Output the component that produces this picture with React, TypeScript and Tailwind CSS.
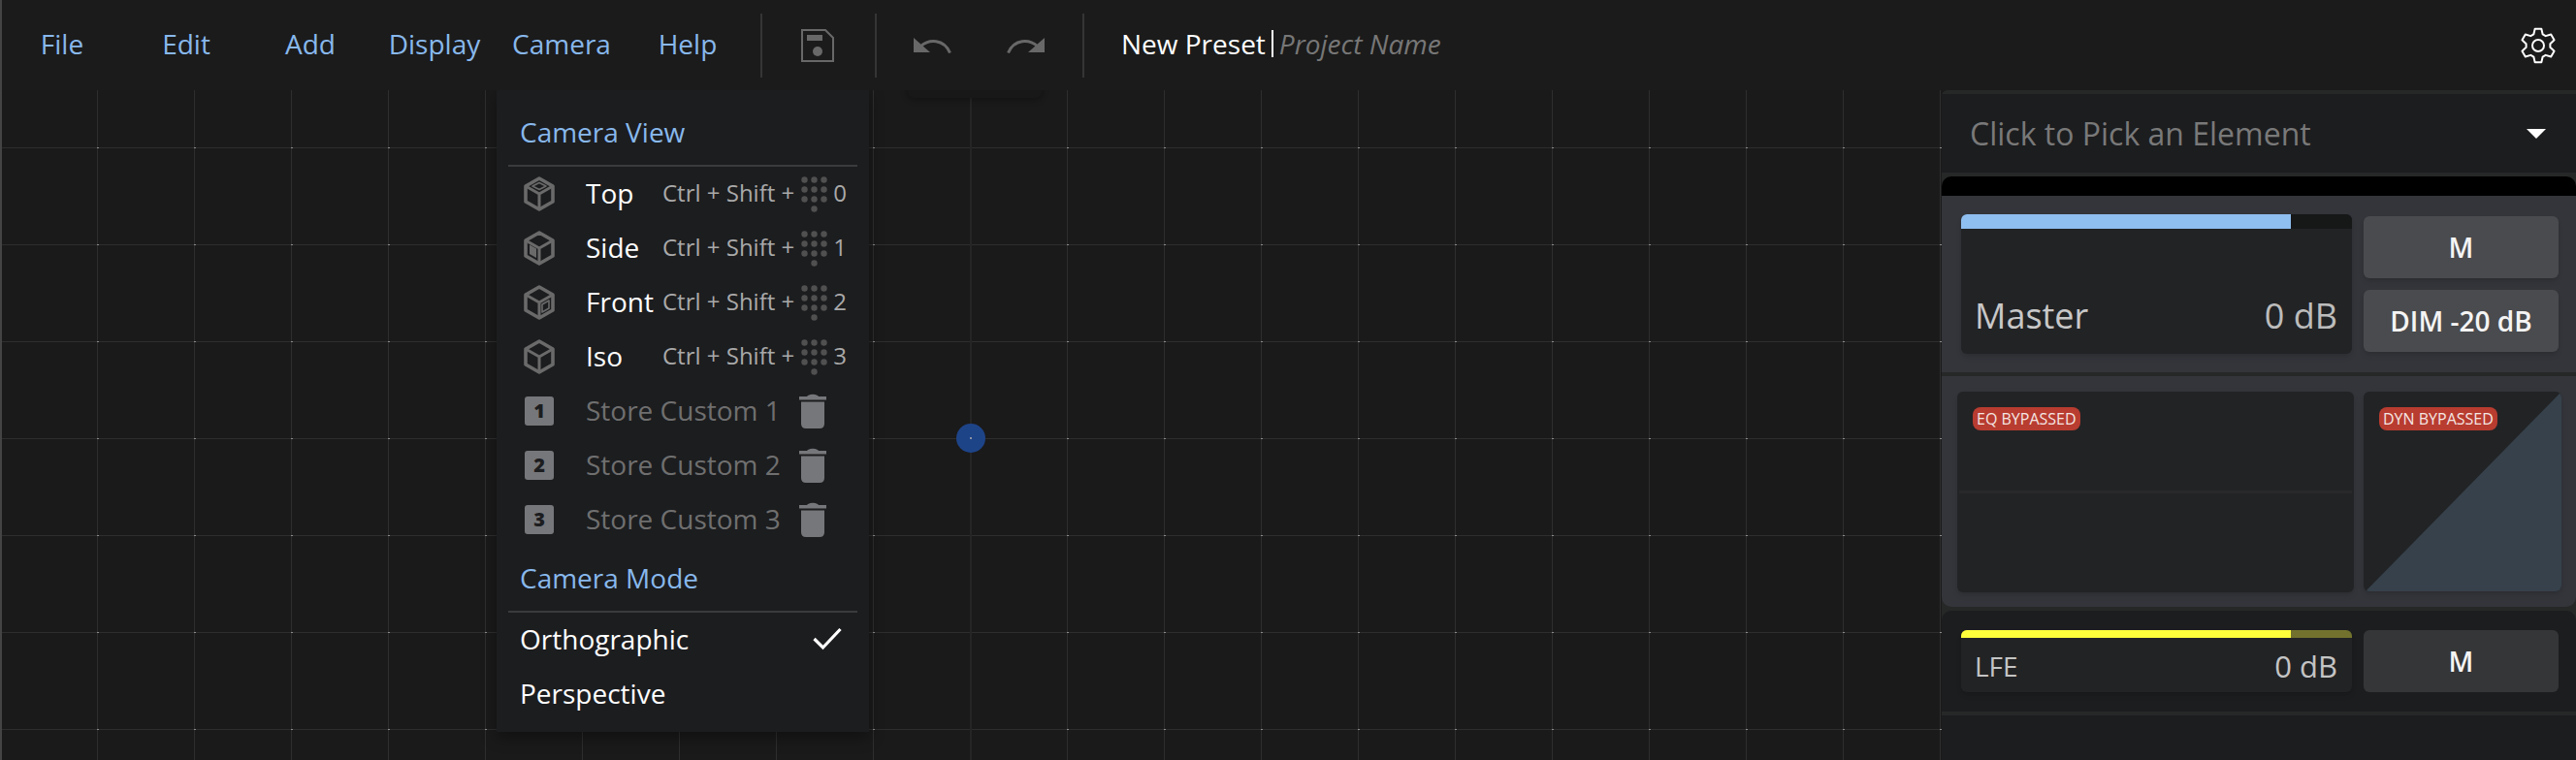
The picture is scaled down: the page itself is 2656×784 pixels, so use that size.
import React from "react";

const menus = [
  { label: "File", offset: "" },
  { label: "Edit", offset: "" },
  { label: "Add", offset: "" },
  { label: "Display", offset: "" },
  { label: "Camera", offset: "ml-[3px]" },
  { label: "Help", offset: "ml-[2px]" },
];

const views = [
  { label: "Top", face: "top", key: "0" },
  { label: "Side", face: "side", key: "1" },
  { label: "Front", face: "front", key: "2" },
  { label: "Iso", face: "none", key: "3" },
];

function gearPoints() {
  const pts: string[] = [];
  for (let i = 0; i < 6; i++) {
    const a = (i * 60 * Math.PI) / 180 - Math.PI / 2;
    const at = (r: number, d: number) => {
      const t = a + (d * Math.PI) / 180;
      return `${(19 + r * Math.cos(t)).toFixed(2)},${(19 + r * Math.sin(t)).toFixed(2)}`;
    };
    pts.push(at(12.5, -22), at(17.5, -11), at(17.5, 11), at(12.5, 22));
  }
  return pts.join(" ");
}

function Gear() {
  return (
    <svg width="38" height="38" viewBox="0 0 38 38" fill="none" stroke="#fff" strokeWidth="2" strokeLinejoin="round">
      <polygon points={gearPoints()} />
      <circle cx="19" cy="19" r="6" />
    </svg>
  );
}

function Cube({ face }: { face: string }) {
  return (
    <svg width="32" height="36" viewBox="0 0 32 36" fill="none" stroke="#6a6a6a" strokeWidth="3.6" strokeLinejoin="round">
      <polygon points="16,2 30,10 30,26 16,34 2,26 2,10" />
      <path d="M2 10 L16 18 L30 10 M16 18 V34" strokeWidth="3" />
      {face === "top" && <polygon points="16,6.5 23,10 16,13.5 9,10" strokeWidth="1.6" />}
      {face === "side" && <polygon points="6,14.5 13,18.5 13,28 6,24" fill="#6a6a6a" stroke="none" />}
      {face === "front" && (
        <polygon points="19,20 26,16 26,24 19,28" fill="#1c1d1f" stroke="#6a6a6a" strokeWidth="1.6" />
      )}
    </svg>
  );
}

function Numpad() {
  const dots: [number, number][] = [];
  for (let r = 0; r < 3; r++) for (let c = 0; c < 3; c++) dots.push([3.5 + c * 10, 3.5 + r * 10]);
  dots.push([13.5, 33.5]);
  return (
    <svg width="27" height="37" viewBox="0 0 27 37" fill="#505050">
      {dots.map(([x, y]) => (
        <circle key={`${x}-${y}`} cx={x} cy={y} r="3.2" />
      ))}
    </svg>
  );
}

function Trash() {
  return (
    <svg width="28" height="36" viewBox="0 0 28 36" fill="#76777a">
      <path d="M9 2 Q14 -0.5 19 2 L20 3 H28 V6.5 H0 V3 H8 Z" />
      <path d="M2 8.5 H26 V31 Q26 36 21 36 H7 Q2 36 2 31 Z" />
    </svg>
  );
}

function UndoArrow({ flip }: { flip?: boolean }) {
  return (
    <svg width="40" height="16" viewBox="0 0 40 16" fill="#686868" className={flip ? "-scale-x-100" : ""}>
      <polygon points="0,0 0,15 17,15" />
      <path d="M7 9 C16 1 31 1 37.5 15.5" fill="none" stroke="#686868" strokeWidth="3" />
    </svg>
  );
}

function Separator() {
  return <div className="w-[2px] h-[66px] bg-[#353535]" />;
}

function Divider() {
  return <div className="mx-[12px] h-[2px] bg-[#3a3b3d]" />;
}

function Grid() {
  return (
    <svg className="absolute inset-0" width="2656" height="691">
      <defs>
        <pattern id="cell" width="100" height="100" patternUnits="userSpaceOnUse" x="0" y="-41">
          <rect x="0" y="0" width="1" height="100" fill="#2e2e2e" />
          <rect x="0" y="0" width="100" height="1" fill="#2e2e2e" />
          <rect x="0" y="0" width="2" height="1" fill="#8a8a8a" />
        </pattern>
      </defs>
      <rect width="2656" height="691" fill="url(#cell)" />
      <rect x="1000" y="0" width="2" height="691" fill="#252525" />
      <circle cx="1001" cy="359" r="15" fill="#1e4488" />
      <rect x="1000" y="358" width="2" height="2" fill="#8a93a3" />
    </svg>
  );
}

function CameraMenu() {
  return (
    <div className="absolute left-[512px] top-[-1px] w-[384px] h-[663px] bg-[#1c1d1f] shadow-[0_6px_14px_rgba(0,0,0,0.35)]">
      <div className="h-[78px] pl-[24px] pt-[25px] text-[28px] leading-[38px] text-[#88b8ec]">Camera View</div>
      <Divider />
      {views.map((view) => (
        <div key={view.label} className="flex items-center h-[56px] pl-[28px]">
          <Cube face={view.face} />
          <span className="ml-[32px] mb-[2px] w-[79px] text-[28px] text-white">{view.label}</span>
          <span className="mb-[2px] whitespace-nowrap text-[24px] text-[#a9a9a9]">Ctrl + Shift +</span>
          <span className="ml-[7px]">
            <Numpad />
          </span>
          <span className="ml-[6px] mb-[2px] text-[24px] text-[#a9a9a9]">{view.key}</span>
        </div>
      ))}
      {[1, 2, 3].map((n) => (
        <div key={n} className="flex items-center h-[56px] pl-[29px]">
          <div className="flex items-center justify-center w-[30px] h-[30px] rounded-[3px] bg-[#76777a] text-[20px] font-extrabold text-[#1c1d1f]">
            {n}
          </div>
          <span className="ml-[33px] mb-[2px] w-[220px] text-[28px] text-[#6f6f6f]">Store Custom {n}</span>
          <Trash />
        </div>
      ))}
      <div className="flex items-center h-[66px] pl-[24px] pb-[2px] text-[28px] text-[#88b8ec]">Camera Mode</div>
      <Divider />
      <div className="flex items-center justify-between h-[56px] pl-[24px] pr-[28px] pb-[2px] text-[28px] text-white">
        Orthographic
        <svg width="30" height="24" viewBox="0 0 30 24" fill="none" stroke="#fff" strokeWidth="3.2">
          <path d="M1.5 12 L10.5 21 L28.5 2" />
        </svg>
      </div>
      <div className="flex items-center h-[56px] pl-[24px] pb-[2px] text-[28px] text-white">Perspective</div>
    </div>
  );
}

function SidePanel() {
  return (
    <div className="relative ml-auto flex flex-col gap-[4px] w-[654px] h-full pt-[4px] bg-[#262727] rounded-tl-[6px]">
      <div className="flex items-center justify-between h-[81px] pl-[29px] pr-[31px] bg-[#1c1d1f]">
        <span className="text-[32px] text-[#797979]">Click to Pick an Element</span>
        <span className="w-0 h-0 border-x-[10px] border-x-transparent border-t-[10px] border-t-white" />
      </div>

      <div className="h-[202px] pt-[20px] bg-black rounded-t-[10px] overflow-hidden">
        <div className="flex gap-[12px] h-[182px] pl-[20px] pt-[19px] bg-[#33353a]">
          <div className="flex flex-col w-[403px] h-[144px] rounded-[6px] bg-[#222325] overflow-hidden shadow-md">
            <div className="flex h-[15px] bg-[#161717]">
              <div className="w-[340px] bg-[#8fbef0]" />
            </div>
            <div className="flex items-center justify-between mt-[66px] pl-[14px] pr-[15px]">
              <span className="text-[36px] leading-[48px] text-[#c8c8c8]">Master</span>
              <span className="text-[36px] leading-[48px] font-medium text-[#bcbcbc]">0 dB</span>
            </div>
          </div>
          <div className="flex flex-col gap-[12px] w-[201px] pt-[2px]">
            <div className="flex items-center justify-center h-[64px] rounded-[6px] bg-[#4a4b4e] text-[28px] font-semibold text-[#f4f4f4] shadow-md">
              M
            </div>
            <div className="flex items-center justify-center h-[64px] rounded-[6px] bg-[#4a4b4e] text-[28px] font-semibold text-[#f4f4f4] shadow-md">
              DIM -20 dB
            </div>
          </div>
        </div>
      </div>

      <div className="flex gap-[10px] h-[238px] pl-[16px] pt-[16px] bg-[#33353a] rounded-b-[10px]">
        <div className="relative w-[409px] h-[207px] rounded-[6px] bg-[#222325] shadow-md">
          <div className="absolute left-[2px] right-[2px] top-[102px] h-[3px] bg-[#29292b]" />
          <span className="absolute left-[16px] top-[16px] flex items-center h-[24px] px-[4px] rounded-[8px] bg-[#b83c30] text-[16px] text-[#f4e6e3]">
            EQ BYPASSED
          </span>
        </div>
        <div className="relative w-[204px] h-[206px] rounded-[6px] bg-[#222325] shadow-md overflow-hidden">
          <svg className="absolute inset-0" width="204" height="206" viewBox="0 0 204 206">
            <polygon points="2,206 204,0 204,206" fill="#36414b" />
          </svg>
          <span className="absolute left-[16px] top-[16px] flex items-center h-[24px] px-[4px] rounded-[8px] bg-[#b83c30] text-[16px] text-[#f4e6e3]">
            DYN BYPASSED
          </span>
        </div>
      </div>

      <div className="flex gap-[12px] h-[104px] pl-[20px] pt-[20px] bg-[#1c1d1f] rounded-t-[10px]">
        <div className="flex flex-col w-[403px] h-[64px] rounded-[6px] bg-[#222325] overflow-hidden shadow-md">
          <div className="flex h-[8px] bg-[#72722e]">
            <div className="w-[340px] bg-[#ffff3c]" />
          </div>
          <div className="flex items-center justify-between pl-[14px] pr-[15px] pt-[10px] leading-[38px] text-[#c4c4c4]">
            <span className="text-[28px]">LFE</span>
            <span className="text-[31px]">0 dB</span>
          </div>
        </div>
        <div className="flex items-center justify-center w-[201px] h-[64px] rounded-[6px] bg-[#353638] text-[28px] font-semibold text-[#f4f4f4]">
          M
        </div>
      </div>

      <div className="flex-1 bg-[#1c1d1f]" />
    </div>
  );
}

export default function App() {
  return (
    <div className="relative flex flex-col w-[2656px] h-[784px] overflow-hidden bg-[#1a1a1a] font-['Open_Sans',sans-serif]">
      {/* Toolbar */}
      <header className="relative z-20 flex items-center h-[93px] bg-[#1b1b1b]">
        {menus.map((menu) => (
          <div key={menu.label} className={`${menu.offset} w-[128px] mb-[3px] text-center text-[28px] text-[#88b8ec]`}>
            {menu.label}
          </div>
        ))}
        <div className="ml-[11px]">
          <Separator />
        </div>
        <svg className="ml-[40px]" width="34" height="34" viewBox="0 0 34 34" fill="#686868">
          <path d="M1 1 H25 L33 9 V33 H1 Z" fill="none" stroke="#686868" strokeWidth="2" />
          <rect x="6" y="6" width="16" height="6" />
          <circle cx="17" cy="23" r="5" />
        </svg>
        <div className="ml-[42px]">
          <Separator />
        </div>
        <div className="ml-[38px]">
          <UndoArrow />
        </div>
        <div className="ml-[55px]">
          <UndoArrow flip />
        </div>
        <div className="ml-[39px]">
          <Separator />
        </div>
        <div className="flex items-center ml-[38px] mb-[3px] text-[28px]">
          <span className="text-white">New Preset</span>
          <span className="ml-[6px] w-[2px] h-[28px] bg-white" />
          <span className="ml-[6px] italic text-[#777]">Project Name</span>
        </div>
        <div className="ml-auto mr-[20px] flex">
          <Gear />
        </div>
      </header>

      {/* Canvas and side panel */}
      <main className="relative flex flex-1">
        <Grid />
        <div className="absolute left-[935px] top-[-8px] z-10 w-[140px] h-[16px] rounded-b-[8px] bg-[#181818] shadow-[0_2px_6px_rgba(0,0,0,0.3)]" />
        <CameraMenu />
        <SidePanel />
      </main>

      <div className="absolute left-0 top-0 z-30 w-[2px] h-full bg-[#444]" />
    </div>
  );
}
